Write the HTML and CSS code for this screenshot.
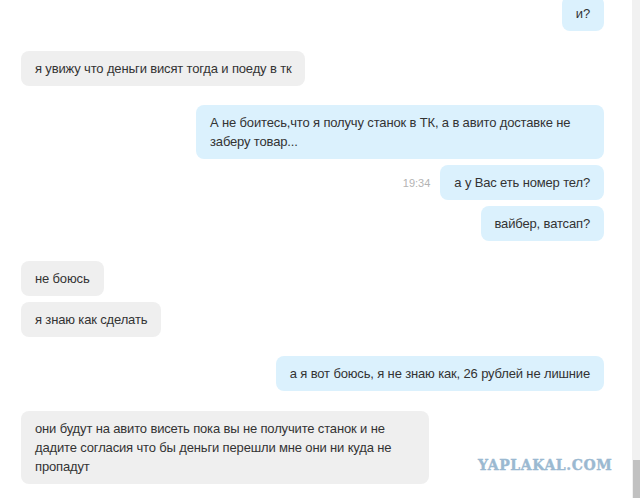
FILE: index.html
```html
<!DOCTYPE html>
<html lang="ru">
<head>
<meta charset="utf-8">
<link rel="stylesheet" href="styles.css">
</head>
<body>
<div class="page">
  <div class="chat">
    <div class="group out">
      <div class="row"><div class="bubble">и?</div></div>
    </div>
    <div class="group in">
      <div class="row"><div class="bubble">я увижу что деньги висят тогда и поеду в тк</div></div>
    </div>
    <div class="group out">
      <div class="row"><div class="bubble">А не боитесь,что я получу станок в ТК, а в авито доставке не заберу товар...</div></div>
      <div class="row"><span class="time">19:34</span><div class="bubble">а у Вас еть номер тел?</div></div>
      <div class="row"><div class="bubble">вайбер, ватсап?</div></div>
    </div>
    <div class="group in">
      <div class="row"><div class="bubble">не боюсь</div></div>
      <div class="row"><div class="bubble">я знаю как сделать</div></div>
    </div>
    <div class="group out">
      <div class="row"><div class="bubble">а я вот боюсь, я не знаю как, 26 рублей не лишние</div></div>
    </div>
    <div class="group in">
      <div class="row"><div class="bubble">они будут на авито висеть пока вы не получите станок и не дадите согласия что бы деньги перешли мне они ни куда не пропадут</div></div>
    </div>
  </div>
  <div class="scrollbar"><div class="thumb"></div></div>
  <div class="watermark">YAPLAKAL.COM</div>
</div>
</body>
</html>
```
FILE: styles.css
```css
html, body {
  margin: 0;
  padding: 0;
  background: #ffffff;
}
.page {
  position: relative;
  display: flex;
  width: 640px;
  height: 498px;
  overflow: hidden;
  font-family: "Liberation Sans", Arial, sans-serif;
  font-size: 13px;
  letter-spacing: -0.15px;
  color: #333333;
}
.chat {
  flex: 1;
  display: flex;
  flex-direction: column;
  gap: 19.5px;
  padding: 0 28px 0 21px;
  margin-top: -4px;
}
.group {
  display: flex;
  flex-direction: column;
  gap: 6px;
}
.row {
  display: flex;
  align-items: center;
  gap: 10px;
}
.out .row {
  justify-content: flex-end;
}
.in .row {
  justify-content: flex-start;
}
.bubble {
  box-sizing: border-box;
  max-width: 408px;
  padding: 8px 14px;
  line-height: 19px;
  border-radius: 8px;
}
.out .bubble {
  background: #dbf1fd;
}
.in .bubble {
  background: #efefef;
}
.time {
  font-size: 11px;
  letter-spacing: 0;
  color: #b3b3b3;
}
.scrollbar {
  width: 8px;
  background: #f1f1f1;
  position: relative;
}
.thumb {
  position: absolute;
  left: 1px;
  right: 0;
  bottom: 0;
  height: 38px;
  background: #c1c1c1;
}
.watermark {
  position: absolute;
  left: 478px;
  top: 457px;
  font-family: "DejaVu Serif", serif;
  font-weight: 900;
  font-size: 14px;
  letter-spacing: 0.6px;
  color: #9bb9d1;
  -webkit-text-stroke: 0.4px #9bb9d1;
}
```
